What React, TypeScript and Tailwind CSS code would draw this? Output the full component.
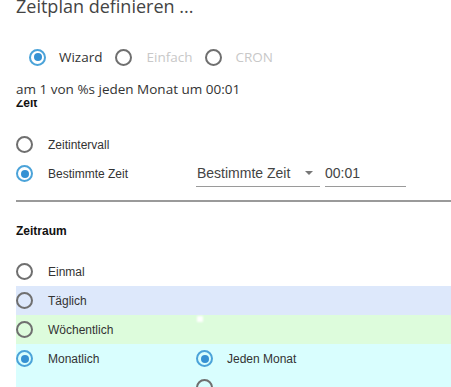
import React from "react";

type RadioProps = {
  checked?: boolean;
};

function Radio({ checked = false }: RadioProps) {
  return (
    <span
      className={
        checked
          ? "flex h-[17px] w-[17px] shrink-0 items-center justify-center rounded-full border-2 border-[#4ba3d9]"
          : "flex h-[17px] w-[17px] shrink-0 items-center justify-center rounded-full border-2 border-[#6f6f6f]"
      }
    >
      {checked && <span className="h-[8px] w-[8px] rounded-full bg-[#3591d3]" />}
    </span>
  );
}

const label = "font-['Liberation_Sans',Arial,sans-serif] text-[12px] text-[#333]";

function OptionRow({
  text,
  checked,
  bg,
  children,
}: {
  text: string;
  checked?: boolean;
  bg: string;
  children?: React.ReactNode;
}) {
  return (
    <div className={`flex ${bg}`}>
      <div className="flex h-[29px] w-[180px] shrink-0 items-center">
        <Radio checked={checked} />
        <span className={`ml-[15px] ${label}`}>{text}</span>
      </div>
      {children}
    </div>
  );
}

export default function App() {
  return (
    <div className="h-[387px] w-[451px] overflow-hidden bg-white pl-4">
      {/* Header */}
      <div className="h-[13px] font-['Open_Sans',sans-serif] text-[18px] leading-[13px] text-[#444]">
        Zeitplan definieren ...
      </div>

      {/* Mode switch */}
      <div className="mt-[30px] flex h-[28px] items-center pl-[13px] font-['Open_Sans',sans-serif] text-[13.5px]">
        <Radio checked />
        <span className="ml-[13px] text-[#333]">Wizard</span>
        <span className="ml-[13px]">
          <Radio />
        </span>
        <span className="ml-[14px] text-[#c8c8c8]">Einfach</span>
        <span className="ml-[13px]">
          <Radio />
        </span>
        <span className="ml-[13px] text-[#c8c8c8]">CRON</span>
      </div>

      <div className="relative z-10 mt-[10px] h-[19px] bg-white font-['Open_Sans',sans-serif] text-[13.5px] leading-[17px] text-[#333]">
        am 1 von %s jeden Monat um 00:01
      </div>
      <div className="mt-[-4px] h-[14px] font-['Liberation_Sans',Arial,sans-serif] text-[12px] font-bold leading-[14px] text-[#111]">
        Zeit
      </div>

      {/* Time */}
      <div className="mt-[20px]">
        <div className="flex h-[29px] items-center">
          <Radio />
          <span className={`ml-[15px] ${label}`}>Zeitintervall</span>
        </div>
        <div className="flex h-[29px] items-center">
          <div className="flex w-[180px] items-center">
            <Radio checked />
            <span className={`ml-[15px] ${label}`}>Bestimmte Zeit</span>
          </div>
          <div className="flex h-[26px] w-[124px] items-center justify-between border-b border-[#9a9a9a] pl-[1px] pr-[7px] font-['Liberation_Sans',Arial,sans-serif] text-[14px] text-[#444]">
            <span>Bestimmte Zeit</span>
            <span className="h-0 w-0 border-x-[4px] border-t-[4px] border-x-transparent border-t-[#777]" />
          </div>
          <div className="ml-[5px] flex h-[26px] w-[81px] items-center border-b border-[#9a9a9a] font-['Liberation_Sans',Arial,sans-serif] text-[14px] text-[#444]">
            00:01
          </div>
        </div>
      </div>

      <div className="mt-[12px] h-[2px] bg-[#9a9a9a]" />

      <div className="mt-[22px] h-[14px] font-['Liberation_Sans',Arial,sans-serif] text-[12px] font-bold leading-[14px] text-[#111]">
        Zeitraum
      </div>

      {/* Period */}
      <div className="mt-[19px]">
        <OptionRow text="Einmal" bg="bg-white" />
        <OptionRow text="Täglich" bg="bg-[#dde8fb]" />
        <OptionRow text="Wöchentlich" bg="bg-[#ddfcdc]">
          <span className="ml-[1px] mt-[1px] h-[6px] w-[6px] self-start bg-white blur-[1px]" />
        </OptionRow>
        <OptionRow text="Monatlich" checked bg="bg-[#d9fefe]">
          <div className="flex flex-col">
            <div className="flex h-[29px] items-center">
              <Radio checked />
              <span className={`ml-[14px] ${label}`}>Jeden Monat</span>
            </div>
            <div className="flex h-[29px] items-center">
              <Radio />
            </div>
          </div>
        </OptionRow>
      </div>
    </div>
  );
}
